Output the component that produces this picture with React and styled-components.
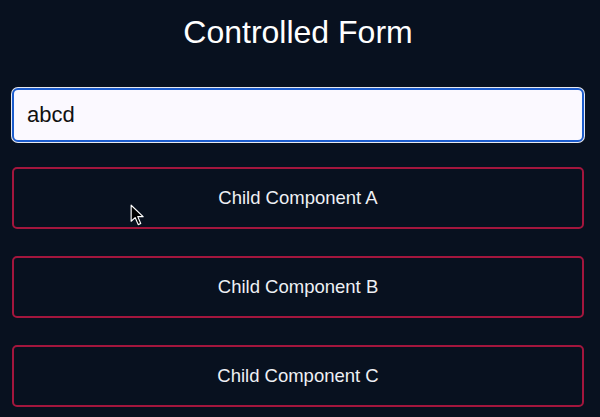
import React, { useState } from 'react';
import styled, { createGlobalStyle } from 'styled-components';

const GlobalStyle = createGlobalStyle`
  html, body {
    margin: 0;
    padding: 0;
    background: #08111f;
  }
  body {
    font-family: "Liberation Sans", Arial, sans-serif;
  }
`;

const children = ['A', 'B', 'C'];

const App = () => {
  const [value, setValue] = useState('abcd');

  return (
    <Page>
      <GlobalStyle />
      <Title>Controlled Form</Title>
      <Input value={value} onChange={(e) => setValue(e.target.value)} autoFocus />
      <List>
        {children.map((c, i) => (
          <ChildBox key={c}>
            Child Component {c}
            {i === 0 && (
              <Pointer viewBox="0 0 14 20" width="16" height="23">
                <path
                  d="M1 1 L1 15 L4.5 11.8 L7.2 18 L9.4 17 L6.8 11 L11.5 11 Z"
                  fill="#000"
                  stroke="#fff"
                  strokeWidth="1"
                  strokeLinejoin="round"
                />
              </Pointer>
            )}
          </ChildBox>
        ))}
      </List>
    </Page>
  );
};

export default App;

const Page = styled.div`
  width: 600px;
  height: 417px;
  box-sizing: border-box;
  padding: 12px 16px 0 12px;
  display: flex;
  flex-direction: column;
  overflow: hidden;
`;

const Title = styled.h1`
  margin: 0 0 36px;
  text-align: center;
  color: #ffffff;
  font-weight: 400;
  font-size: 32px;
  line-height: 40px;
`;

const Input = styled.input`
  box-sizing: border-box;
  width: 100%;
  height: 54px;
  margin: 0;
  padding: 0 13px;
  border: 2px solid #1c5ccc;
  border-radius: 6px;
  box-shadow: 0 0 0 1px #e8eaf0;
  background: #fbf9ff;
  color: #111;
  font-family: "Liberation Sans", Arial, sans-serif;
  font-size: 22px;
  outline: none;
  caret-color: #000;
`;

const List = styled.div`
  margin-top: 25px;
  display: flex;
  flex-direction: column;
  gap: 27px;
`;

const ChildBox = styled.div`
  position: relative;
  box-sizing: border-box;
  height: 62px;
  display: flex;
  align-items: center;
  justify-content: center;
  border: 2px solid #a3163d;
  border-radius: 5px;
  color: #eef0f4;
  font-size: 18.5px;
`;

const Pointer = styled.svg`
  position: absolute;
  left: 116px;
  top: 35px;
`;
